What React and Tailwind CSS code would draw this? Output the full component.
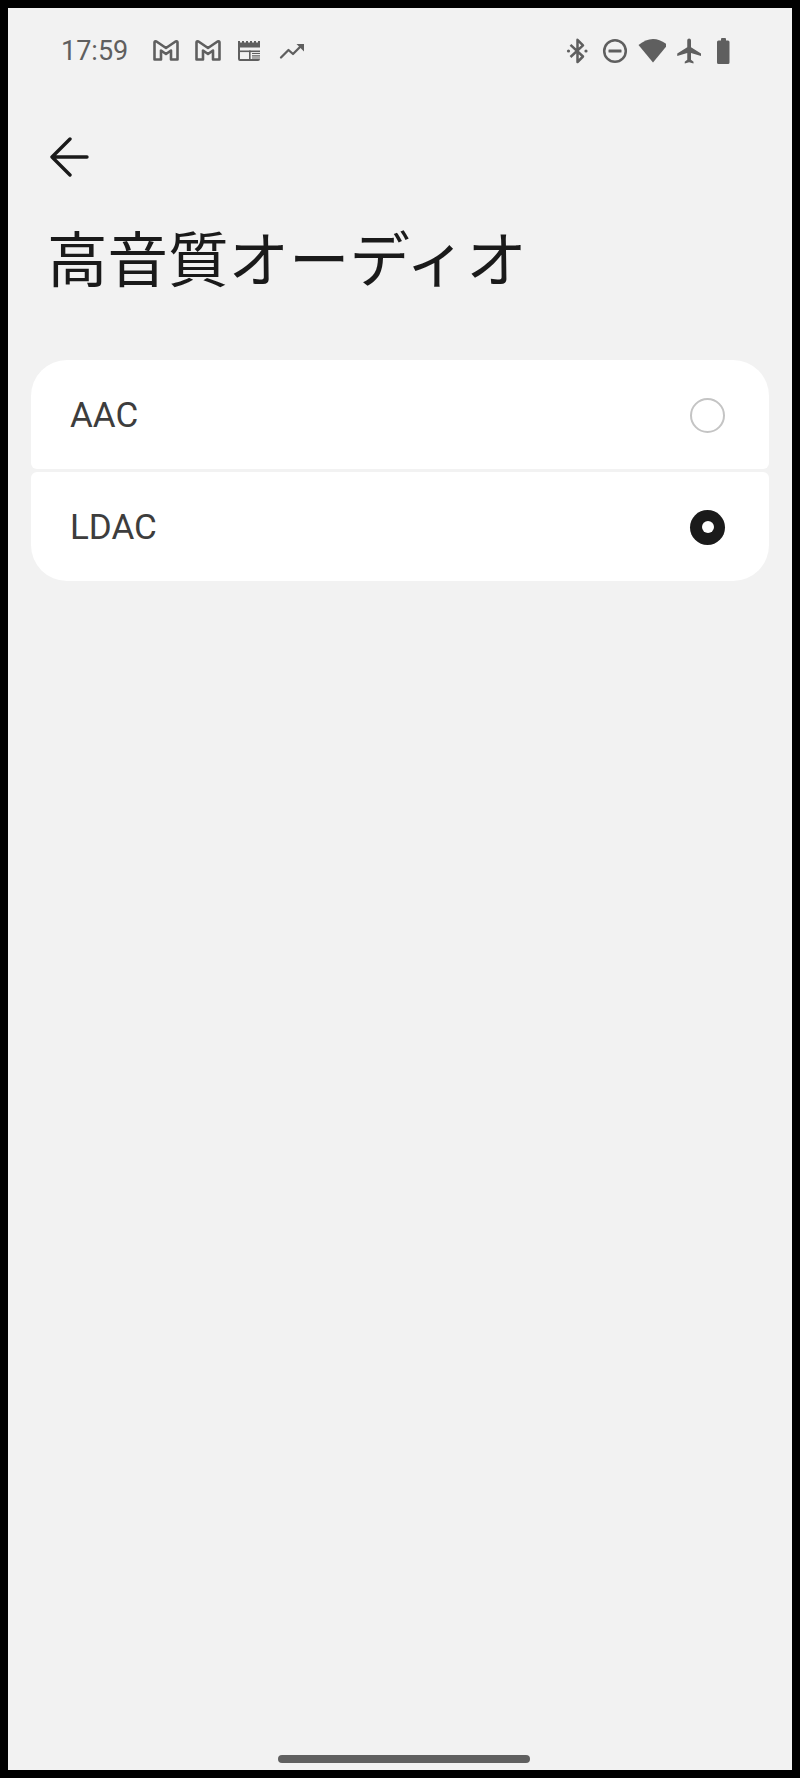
import React from "react";

const ICON = "#5f5f5f";

const GmailIcon = () => (
  <svg width="26" height="30" viewBox="0 0 26 30" fill="none">
    <path
      d="M1.5 6.5 Q1.5 5 3.5 5.5 L13 12 L22.500 5.5 Q24.5 5 24.5 6.5 V23.5 H18 V14.5 L13 18 L8 14.5 V23.5 H1.5 Z"
      stroke={ICON}
      strokeWidth="2.6"
      strokeLinejoin="round"
    />
  </svg>
);

const NewsIcon = () => (
  <svg width="26" height="30" viewBox="0 0 26 30" fill="none">
    <path d="M1 6.5 V5 h2 v1.5 h2 V5 h2 v1.5 h2 V5 h2 v1.5 h2 V5 h2 v1.5 h2 V5 h2 v1.5 h2 V5 h2 v1.5 V23 a2 2 0 0 1-2 2 H3 a2 2 0 0 1-2-2 Z" fill={ICON} />
    <rect x="3" y="11.5" width="20" height="11.5" fill="#f2f2f2" />
    <rect x="3" y="14.5" width="20" height="1.6" fill={ICON} />
    <rect x="12" y="14.5" width="1.6" height="9" fill={ICON} />
    <path d="M15 17.5 h8 M15 19.8 h8 M15 22 h8" stroke={ICON} strokeWidth="1.2" />
  </svg>
);

const TrendIcon = () => (
  <svg width="26" height="30" viewBox="0 0 26 30" fill="none">
    <path d="M2 21.5 L9.5 14 L14 18 L22 10" stroke={ICON} strokeWidth="2.3" strokeLinecap="round" strokeLinejoin="round" />
    <path d="M17.5 8 H25 V15.5 Z" fill={ICON} />
  </svg>
);

const BluetoothIcon = () => (
  <svg width="30" height="30" viewBox="0 0 30 30" fill="none">
    <path d="M8.500 8.800 L21 20.5 L15.5 26 V3.800 L21 9.300 L8.500 21" stroke={ICON} strokeWidth="2.5" strokeLinejoin="round" />
    <circle cx="6.5" cy="15" r="1.6" fill={ICON} />
    <circle cx="24" cy="15" r="1.6" fill={ICON} />
  </svg>
);

const DndIcon = () => (
  <svg width="30" height="30" viewBox="0 0 30 30" fill="none">
    <circle cx="16" cy="15" r="10.8" stroke={ICON} strokeWidth="2.5" />
    <rect x="9.5" y="13.5" width="13" height="3" rx="0.5" fill={ICON} />
  </svg>
);

const WifiIcon = () => (
  <svg width="30" height="30" viewBox="0 0 30 30" fill="none">
    <path d="M1 9 Q15.5 -3 30 9 L15.500 26.5 Z" fill={ICON} transform="translate(1.5 0)" />
  </svg>
);

const PlaneIcon = () => (
  <svg width="30" height="30" viewBox="0 0 24 24" fill="none">
    <path
      d="M21 16v-2l-8-5V3.5c0-.83-.67-1.5-1.5-1.5S10 2.67 10 3.5V9l-8 5v2l8-2.5V19l-2 1.5V22l3.5-1 3.5 1v-1.5L13 19v-5.5l8 2.5z"
      fill={ICON}
      transform="translate(1.4 0)"
    />
  </svg>
);

const BatteryIcon = () => (
  <svg width="30" height="30" viewBox="0 0 30 30" fill="none">
    <path d="M11 3 a1 1 0 0 1 1-1 h3 a1 1 0 0 1 1 1 v1.5 h2 a1.500 1.500 0 0 1 1.500 1.500 V26.500 a1.500 1.500 0 0 1-1.500 1.500 H8.500 a1.500 1.500 0 0 1-1.500-1.500 V6 a1.500 1.500 0 0 1 1.500-1.500 h2.500 Z" fill={ICON} />
  </svg>
);

const ArrowBack = () => (
  <svg width="40" height="40" viewBox="0 0 40 40" fill="none">
    <path d="M20 2 L2 20 L20 38 M2 20 H37" stroke="#1a1a1a" strokeWidth="3.4" strokeLinecap="round" strokeLinejoin="round" />
  </svg>
);

const Radio = ({ checked }) =>
  checked ? (
    <div className="w-[35px] h-[35px] rounded-full bg-[#1a1a1a] flex items-center justify-center">
      <div className="w-[12px] h-[12px] rounded-full bg-white" />
    </div>
  ) : (
    <div className="w-[35px] h-[35px] rounded-full border-2 border-[#c4c4c4]" />
  );

export default function App() {
  return (
    <div className="w-[800px] h-[1778px] bg-black p-2 font-['Roboto',sans-serif]">
      <div className="h-full bg-[#f2f2f2] flex flex-col">
        {/* Status bar */}
        <div className="h-[86px] pl-[53px] pr-[52px] flex items-center justify-between">
          <div className="flex items-center">
            <span className="text-[27px] leading-none text-[#5f5f5f] w-[92px]">17:59</span>
            <div className="flex items-center gap-[16px]">
              <GmailIcon />
              <GmailIcon />
              <NewsIcon />
              <TrendIcon />
            </div>
          </div>
          <div className="flex items-center gap-[7px]">
            <BluetoothIcon />
            <DndIcon />
            <WifiIcon />
            <PlaneIcon />
            <BatteryIcon />
          </div>
        </div>

        {/* Back + title */}
        <div className="pl-[42px] pt-[43px]">
          <ArrowBack />
        </div>
        <h1 className="pl-[39px] mt-[41px] text-[60.5px] leading-[76px] font-normal text-[#1a1a1a] font-['Noto_Sans_CJK_JP',sans-serif]">
          高音質オーディオ
        </h1>

        {/* Options */}
        <div className="mx-[23px] mt-[66px] flex flex-col gap-[3px]">
          <div className="h-[109px] bg-white rounded-t-[36px] rounded-b-[6px] pt-[1px] pl-[39px] pr-[44px] flex items-center justify-between">
            <span className="text-[35px] leading-none text-[#3d3d3d]">AAC</span>
            <Radio />
          </div>
          <div className="h-[109px] bg-white rounded-b-[36px] rounded-t-[6px] pt-[1px] pl-[39px] pr-[44px] flex items-center justify-between">
            <span className="text-[35px] leading-none text-[#3d3d3d]">LDAC</span>
            <Radio checked />
          </div>
        </div>

        {/* Home indicator */}
        <div className="mt-auto mb-[7px] self-center ml-[7px] w-[252px] h-[8px] rounded-full bg-[#606060]" />
      </div>
    </div>
  );
}
